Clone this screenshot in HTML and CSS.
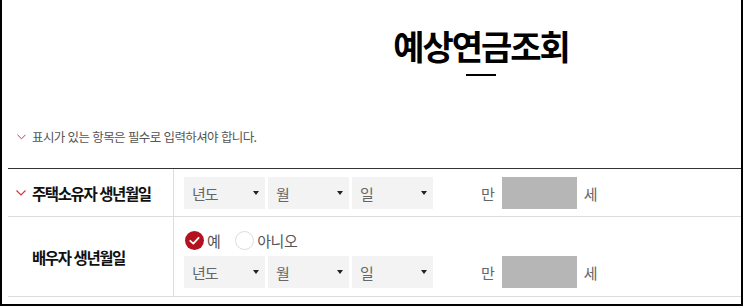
FILE: index.html
```html
<!DOCTYPE html>
<html lang="ko">
<head>
<meta charset="utf-8">
<title>예상연금조회</title>
<link rel="stylesheet" href="styles.css">
</head>
<body>
<div class="frame">
  <div class="page">
    <h1 class="title">예상연금조회</h1>
    <div class="title-bar"></div>
    <p class="note"><svg class="req" viewBox="0 0 10 6" width="9" height="6"><polyline points="0.5,0.5 5,5 9.5,0.5" fill="none" stroke="#c9353f" stroke-width="1.1"/></svg><span>표시가 있는 항목은 필수로 입력하셔야 합니다.</span></p>
    <div class="form">
      <div class="row row-one">
        <div class="label"><svg class="req req-label" viewBox="0 0 10 6" width="10" height="6"><polyline points="0.5,0.5 5,5 9.5,0.5" fill="none" stroke="#c9353f" stroke-width="1.1"/></svg><span>주택소유자 생년월일</span></div>
        <div class="cell">
          <div class="date-line">
            <div class="select"><span>년도</span><i class="arrow"></i></div>
            <div class="select"><span>월</span><i class="arrow"></i></div>
            <div class="select"><span>일</span><i class="arrow"></i></div>
            <span class="unit unit-man">만</span>
            <div class="age"></div>
            <span class="unit unit-se">세</span>
          </div>
        </div>
      </div>
      <div class="row row-two">
        <div class="label label-plain"><span>배우자 생년월일</span></div>
        <div class="cell">
          <div class="radio-line">
            <span class="radio radio-on"><svg viewBox="0 0 19 19" width="19" height="19"><circle cx="9.5" cy="9.5" r="9.5" fill="#b3121f"/><polyline points="5.3,9.8 8.3,12.6 13.6,6.8" fill="none" stroke="#fff" stroke-width="1.8" stroke-linecap="round" stroke-linejoin="round"/></svg></span><span class="radio-text">예</span>
            <span class="radio radio-off"></span><span class="radio-text">아니오</span>
          </div>
          <div class="date-line">
            <div class="select"><span>년도</span><i class="arrow"></i></div>
            <div class="select"><span>월</span><i class="arrow"></i></div>
            <div class="select"><span>일</span><i class="arrow"></i></div>
            <span class="unit unit-man">만</span>
            <div class="age"></div>
            <span class="unit unit-se">세</span>
          </div>
        </div>
      </div>
    </div>
  </div>
</div>
</body>
</html>
```

FILE: styles.css
```css
html, body {
  margin: 0;
  padding: 0;
  background: #fff;
}
body {
  font-family: "Noto Sans CJK KR", "Noto Sans", sans-serif;
  color: #222;
}
.frame {
  width: 743px;
  height: 306px;
  box-sizing: border-box;
  border-left: 2px solid #000;
  border-right: 2px solid #000;
  border-bottom: 2px solid #000;
  overflow: hidden;
}
.page {
  width: 946px;
  margin-left: 6px;
}
.title {
  margin: 0;
  padding-top: 26px;
  font-size: 34px;
  line-height: 40px;
  font-weight: 700;
  color: #000;
  text-align: center;
  letter-spacing: -2px;
}
.title-bar {
  width: 30px;
  height: 2px;
  background: #000;
  margin: 8px auto 0;
}
.note {
  margin: 51px 0 0;
  display: flex;
  align-items: center;
  height: 20px;
  padding-left: 9px;
  font-size: 12.5px;
  line-height: 20px;
  color: #555;
  letter-spacing: -0.6px;
}
.req {
  display: block;
  flex: none;
}
.note .req {
  margin-right: 6px;
}
.form {
  margin-top: 21px;
  border-top: 1px solid #333;
}
.row {
  display: flex;
  border-bottom: 1px solid #ddd;
}
.label {
  flex: none;
  border-right: 1px solid #ddd;
  display: flex;
  align-items: center;
  padding-left: 8px;
  box-sizing: border-box;
  width: 166px;
  font-size: 15.5px;
  font-weight: 700;
  color: #111;
  letter-spacing: -1.4px;
}
.label .req-label {
  margin-right: 6px;
}
.label-plain {
  padding-left: 24px;
}
.cell {
  padding: 8px 0 7px 10px;
  display: flex;
  flex-direction: column;
}
.row-two .cell {
  padding-bottom: 8px;
}
.date-line {
  display: flex;
  align-items: center;
  height: 32px;
}
.select {
  width: 81px;
  height: 32px;
  margin-right: 3px;
  background: #f3f3f3;
  box-sizing: border-box;
  padding: 0 6px 0 8px;
  display: flex;
  align-items: center;
  justify-content: space-between;
  font-size: 15px;
  color: #666;
  letter-spacing: -1px;
}
.arrow {
  width: 0;
  height: 0;
  border-left: 3px solid transparent;
  border-right: 3px solid transparent;
  border-top: 4px solid #222;
}
.unit {
  font-size: 15px;
  color: #666;
}
.unit-man {
  margin-left: 45px;
}
.age {
  width: 75px;
  height: 32px;
  background: #b6b6b6;
  margin-left: 7px;
}
.unit-se {
  margin-left: 7px;
}
.radio-line {
  display: flex;
  align-items: center;
  height: 31px;
  font-size: 15px;
  color: #555;
}
.radio {
  width: 19px;
  height: 19px;
  flex: none;
  margin-left: 1px;
}
.radio svg {
  display: block;
}
.radio-off {
  box-sizing: border-box;
  border: 1px solid #ddd;
  border-radius: 50%;
  background: #fff;
  margin-left: 15px;
}
.radio-text {
  margin-left: 3px;
  letter-spacing: -0.5px;
}
```
